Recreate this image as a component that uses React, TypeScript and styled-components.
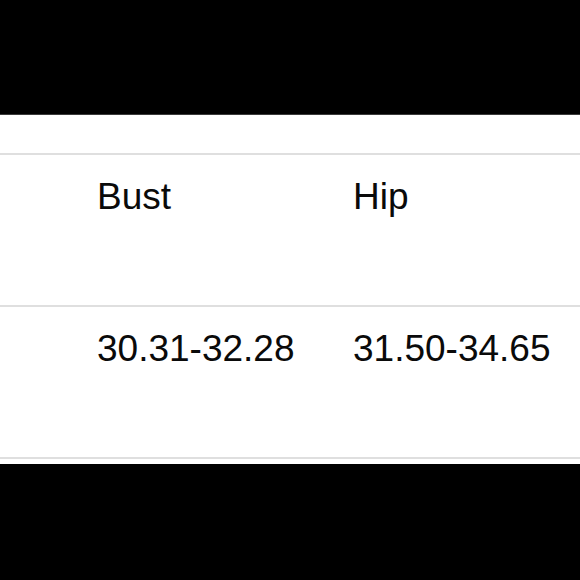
import styled, { createGlobalStyle } from 'styled-components';

const GlobalStyle = createGlobalStyle`
  html, body {
    margin: 0;
    padding: 0;
    background: #000;
  }

  body {
    font-family: 'Liberation Sans', Arial, sans-serif;
  }
`;

const Page = styled.div`
  width: 580px;
  height: 580px;
  display: flex;
  flex-direction: column;
  justify-content: flex-start;
  padding-top: 114px;
  box-sizing: border-box;
`;

const Sheet = styled.div`
  background: #fff;
  height: 350px;
  padding-top: 38px;
  box-sizing: border-box;
  border-top: 1px solid #3a3a3a;
`;

const Row = styled.div`
  display: grid;
  grid-template-columns: 256px 256px;
  padding-left: 97px;
  height: 152px;
  box-sizing: border-box;
  border-top: 2px solid #dfdfdf;
  padding-top: 21px;
`;

const LastRule = styled.div`
  border-top: 2px solid #dfdfdf;
`;

const Cell = styled.div`
  font-size: 37px;
  line-height: 1.15;
  color: #0a0a0a;
  white-space: nowrap;
`;

const rows = [
  ['Bust', 'Hip'],
  ['30.31-32.28', '31.50-34.65'],
];

export default function App() {
  return (
    <>
      <GlobalStyle />
      <Page>
        <Sheet>
          {rows.map((cells, i) => (
            <Row key={i}>
              {cells.map((c) => (
                <Cell key={c}>{c}</Cell>
              ))}
            </Row>
          ))}
          <LastRule />
        </Sheet>
      </Page>
    </>
  );
}
